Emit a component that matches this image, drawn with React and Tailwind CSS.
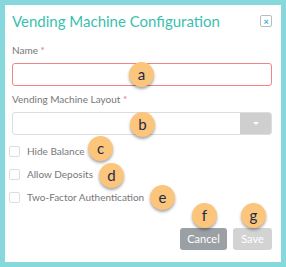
export default function App() {
  const badge = 'absolute w-[25px] h-[25px] rounded-full bg-[#fcc57c] shadow-[0_2px_3px_rgba(0,0,0,0.35)] flex items-center justify-center text-[15px] text-[#1f2a48] leading-none';

  return (
    <div className="w-[286px] h-[267px] bg-[#86d8dc] p-[5px]" style={{ fontFamily: 'Lato, "Liberation Sans", sans-serif' }}>
      <div className="relative h-full bg-white px-[7px] pt-[5px]">
        {/* Header */}
        <div className="flex items-center justify-between">
          <h1 className="text-[15px] text-[#3bbfae] leading-[22px]">Vending Machine Configuration</h1>
          <button className="w-[12px] h-[12px] mr-[2px] border border-[#bbb] rounded-[2px] flex items-center justify-center text-[#2ab0e0] text-[9px] leading-none font-bold">
            ×
          </button>
        </div>

        {/* Name */}
        <div className="mt-[11px] text-[10px] text-[#777] leading-[14px]">
          Name <span className="text-[#f06b6b]">*</span>
        </div>
        <div className="mt-[6px] mr-[2px] h-[23px] border border-[#f08585] rounded-[3px]" />

        {/* Layout */}
        <div className="mt-[6px] text-[10px] text-[#777] leading-[14px]">
          Vending Machine Layout <span className="text-[#f06b6b]">*</span>
        </div>
        <div className="mt-[6px] mr-[2px] h-[23px] flex border border-[#ddd] rounded-[3px] overflow-hidden">
          <div className="flex-1" />
          <div className="w-[31px] bg-[#cfcfcf] flex items-center justify-center">
            <div className="w-0 h-0 border-l-[3px] border-r-[3px] border-t-[3px] border-l-transparent border-r-transparent border-t-white" />
          </div>
        </div>

        {/* Checkboxes */}
        <div className="mt-[10px] flex flex-col gap-[11px] -ml-[3px]">
          {['Hide Balance', 'Allow Deposits', 'Two-Factor Authentication'].map(l => (
            <label key={l} className="flex items-center gap-[7px] text-[10px] text-[#777] leading-[12px]">
              <span className="w-[11px] h-[11px] border border-[#ddd] rounded-[2px] bg-white" />
              {l}
            </label>
          ))}
        </div>

        {/* Buttons */}
        <div className="mt-[25px] mr-[2px] flex justify-end gap-[6px]">
          <button className="w-[47px] h-[22px] rounded-[3px] bg-[#9ba0a4] text-white text-[11px]">Cancel</button>
          <button className="w-[39px] h-[22px] rounded-[3px] bg-[#d3d3d3] text-white text-[11px]">Save</button>
        </div>

        {/* Callout badges */}
        <div className={badge + ' left-[124px] top-[57px]'}>a</div>
        <div className={badge + ' left-[125px] top-[107px]'}>b</div>
        <div className={badge + ' left-[83px] top-[131px]'}>c</div>
        <div className={badge + ' left-[94px] top-[158px]'}>d</div>
        <div className={badge + ' left-[145px] top-[180px]'}>e</div>
        <div className={badge + ' left-[187px] top-[198px]'}>f</div>
        <div className={badge + ' left-[236px] top-[198px]'}>g</div>
      </div>
    </div>
  );
}
